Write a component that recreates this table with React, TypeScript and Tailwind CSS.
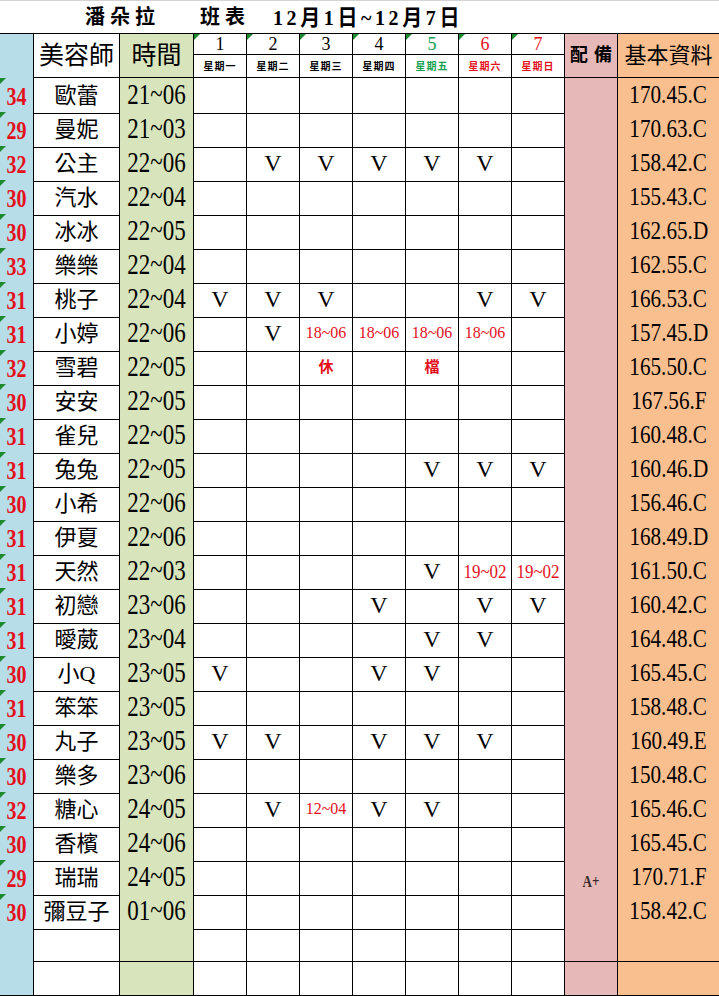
import React from 'react';

const serif = "font-['Liberation_Serif','Noto_Sans_CJK_TC',serif]";
const cols = 'grid grid-cols-[34px_86px_74px_repeat(7,53px)_53px_101px]';

type Row = [string, string, string, string[], string, string];

const rows: Row[] = [
  ['34', '歐蕾', '21~06', [], '', '170.45.C'],
  ['29', '曼妮', '21~03', [], '', '170.63.C'],
  ['32', '公主', '22~06', ['', 'V', 'V', 'V', 'V', 'V', ''], '', '158.42.C'],
  ['30', '汽水', '22~04', [], '', '155.43.C'],
  ['30', '冰冰', '22~05', [], '', '162.65.D'],
  ['33', '樂樂', '22~04', [], '', '162.55.C'],
  ['31', '桃子', '22~04', ['V', 'V', 'V', '', '', 'V', 'V'], '', '166.53.C'],
  ['31', '小婷', '22~06', ['', 'V', '18~06', '18~06', '18~06', '18~06', ''], '', '157.45.D'],
  ['32', '雪碧', '22~05', ['', '', '休', '', '檔', '', ''], '', '165.50.C'],
  ['30', '安安', '22~05', [], '', '167.56.F'],
  ['31', '雀兒', '22~05', [], '', '160.48.C'],
  ['31', '兔兔', '22~05', ['', '', '', '', 'V', 'V', 'V'], '', '160.46.D'],
  ['30', '小希', '22~06', [], '', '156.46.C'],
  ['31', '伊夏', '22~06', [], '', '168.49.D'],
  ['31', '天然', '22~03', ['', '', '', '', 'V', '19~02', '19~02'], '', '161.50.C'],
  ['31', '初戀', '23~06', ['', '', '', 'V', '', 'V', 'V'], '', '160.42.C'],
  ['31', '曖葳', '23~04', ['', '', '', '', 'V', 'V', ''], '', '164.48.C'],
  ['30', '小Q', '23~05', ['V', '', '', 'V', 'V', '', ''], '', '165.45.C'],
  ['31', '笨笨', '23~05', [], '', '158.48.C'],
  ['30', '丸子', '23~05', ['V', 'V', '', 'V', 'V', 'V', ''], '', '160.49.E'],
  ['30', '樂多', '23~06', [], '', '150.48.C'],
  ['32', '糖心', '24~05', ['', 'V', '12~04', 'V', 'V', '', ''], '', '165.46.C'],
  ['30', '香檳', '24~06', [], '', '165.45.C'],
  ['29', '瑞瑞', '24~05', [], 'A+', '170.71.F'],
  ['30', '彌豆子', '01~06', [], '', '158.42.C'],
];

const days = [
  { n: '1', w: '星期一', c: 'text-black' },
  { n: '2', w: '星期二', c: 'text-black' },
  { n: '3', w: '星期三', c: 'text-black' },
  { n: '4', w: '星期四', c: 'text-black' },
  { n: '5', w: '星期五', c: 'text-[#12a04e]' },
  { n: '6', w: '星期六', c: 'text-[#e3101c]' },
  { n: '7', w: '星期日', c: 'text-[#e3101c]' },
];

function Flag() {
  return (
    <span className="absolute left-0 top-0 h-0 w-0 border-t-[6px] border-r-[6px] border-t-[#1d8a2e] border-r-transparent" />
  );
}

function Mark({ v }: { v: string }) {
  if (!v) return null;
  if (v === 'V') return <span className="text-[24px] leading-none">V</span>;
  if (v === '休' || v === '檔')
    return <span className="text-[15px] font-bold text-[#e3101c]">{v}</span>;
  if (v === '19~02')
    return <span className="inline-block scale-y-110 text-[17px] text-[#e3101c]">{v}</span>;
  return <span className="inline-block scale-y-110 text-[16px] text-[#e3101c]">{v}</span>;
}

export default function App() {
  const blank: Row = ['', '', '', [], '', ''];
  const all = [...rows, blank, blank];

  return (
    <div className={`w-[719px] h-[996px] overflow-hidden bg-white text-black ${serif}`}>
      {/* title */}
      <div className="flex h-[34px] items-center border-t border-b border-t-[#d4d4d4] border-b-black pl-[85px] text-[20px] font-bold">
        <span className="tracking-[5px]">潘朵拉</span>
        <span className="ml-[40px] tracking-[5px]">班表</span>
        <span className="ml-[23px] inline-block scale-y-110 tracking-[3.6px]">12月1日~12月7日</span>
      </div>

      {/* header */}
      <div className={`${cols} h-[44px] grid-rows-[21px_23px]`}>
        <div className="row-span-2 border-r border-black bg-[#b7dde8]" />
        <div className="row-span-2 flex items-center justify-center border-r border-b border-black text-[25px]">美容師</div>
        <div className="row-span-2 flex items-center justify-center border-r border-b border-black bg-[#d8e4bc] text-[25px]">時間</div>
        {days.map((d, i) => (
          <div
            key={d.n}
            className={`relative flex items-center justify-center border-r border-b border-black text-[18px] ${d.c}`}
            style={{ gridColumn: i + 4, gridRow: 1 }}
          >
            <Flag />
            {d.n}
          </div>
        ))}
        {days.map((d, i) => (
          <div
            key={d.w}
            className={`flex items-center justify-center border-r border-b border-black text-[10px] font-bold tracking-[1px] ${d.c}`}
            style={{ gridColumn: i + 4, gridRow: 2 }}
          >
            {d.w}
          </div>
        ))}
        <div
          className="row-span-2 flex items-center justify-center gap-[6px] border-r border-b border-black bg-[#e6b8b7] text-[18px] font-bold"
          style={{ gridColumn: 11, gridRow: '1 / span 2' }}
        >
          <span>配</span>
          <span>備</span>
        </div>
        <div
          className="row-span-2 flex items-center justify-center border-b border-black bg-[#fabf8f] text-[22px]"
          style={{ gridColumn: 12, gridRow: '1 / span 2' }}
        >
          基本資料
        </div>
      </div>

      {/* rows */}
      {all.map((r, idx) => {
        const last = idx === all.length - 1;
        return (
          <div key={idx} className={`${cols} h-[34px]`}>
            <div
              className={`relative flex items-center justify-center border-r border-black bg-[#b7dde8] ${last ? 'border-b' : ''}`}
            >
              {r[0] && <Flag />}
              <span className="inline-block scale-y-125 text-[20px] font-bold text-[#e3101c]">{r[0]}</span>
            </div>
            <div className="flex items-center justify-center whitespace-nowrap border-r border-b border-black text-[22px]">
              {r[1]}
            </div>
            <div className="flex items-center justify-center border-r border-b border-black bg-[#d8e4bc]">
              <span className="inline-block scale-y-125 text-[23px]">{r[2]}</span>
            </div>
            {Array.from({ length: 7 }).map((_, d) => (
              <div key={d} className="flex items-center justify-center whitespace-nowrap border-r border-b border-black">
                <Mark v={r[3][d] ?? ''} />
              </div>
            ))}
            <div className="flex items-center justify-center border-r border-b border-black bg-[#e6b8b7]">
              {r[4] && (
                <span className="mt-[8px] inline-block scale-y-125 text-[13px] font-bold text-[#3a2a2a]">{r[4]}</span>
              )}
            </div>
            <div className="flex items-center justify-center border-b border-black bg-[#fabf8f]">
              <span className="inline-block scale-x-[0.92] scale-y-110 text-[23px]">{r[5]}</span>
            </div>
          </div>
        );
      })}
    </div>
  );
}
